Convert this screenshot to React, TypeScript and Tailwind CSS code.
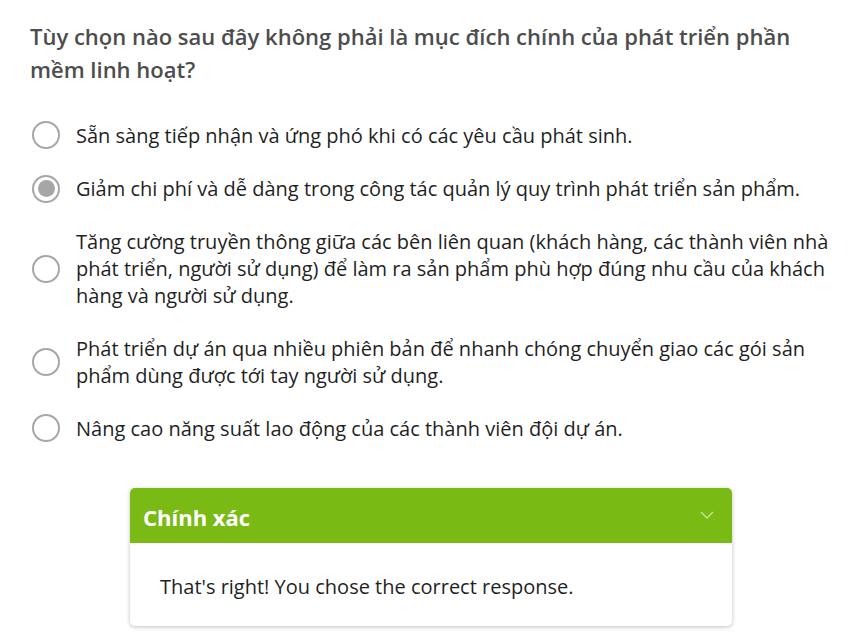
import React from "react";

const options = [
  "Sẵn sàng tiếp nhận và ứng phó khi có các yêu cầu phát sinh.",
  "Giảm chi phí và dễ dàng trong công tác quản lý quy trình phát triển sản phẩm.",
  "Tăng cường truyền thông giữa các bên liên quan (khách hàng, các thành viên nhà phát triển, người sử dụng) để làm ra sản phẩm phù hợp đúng nhu cầu của khách hàng và người sử dụng.",
  "Phát triển dự án qua nhiều phiên bản để nhanh chóng chuyển giao các gói sản phẩm dùng được tới tay người sử dụng.",
  "Nâng cao năng suất lao động của các thành viên đội dự án.",
];

export default function App() {
  return (
    <div
      className="w-[855px] h-[640px] bg-white overflow-hidden"
      style={{ fontFamily: '"Open Sans", "Noto Sans", sans-serif' }}
    >
      <div className="pl-[30px] pr-[22px] pt-[20px]">
        <h1 className="pr-[8px] text-[22px] leading-[33px] font-semibold text-[#4d4d4d]">
          Tùy chọn nào sau đây không phải là mục đích chính của phát triển phần mềm linh hoạt?
        </h1>
        <div className="mt-[35px] flex flex-col gap-[25.5px]">
          {options.map((o, i) => (
            <div key={i} className="flex items-center">
              <div className="ml-[2px] w-[28px] h-[28px] shrink-0 rounded-full border-[2.5px] border-[#a6a6a6] flex items-center justify-center">
                {i === 1 && <div className="w-[17px] h-[17px] rounded-full bg-[#a6a6a6]" />}
              </div>
              <div className="ml-[16px] text-[20px] leading-[27px] text-[#1f1f1f]">{o}</div>
            </div>
          ))}
        </div>
        <div className="mt-[46px] ml-[100px] w-[602px] rounded-[5px] bg-white shadow-[0_1px_4px_rgba(0,0,0,0.25)] overflow-hidden">
          <div className="h-[55px] bg-[#7aba14] flex items-center justify-between pl-[13px] pr-[18px] pt-[3px]">
            <span className="text-[22px] font-bold text-white">Chính xác</span>
            <svg width="14" height="8" viewBox="0 0 14 8" fill="none" className="-mt-[4px]">
              <path d="M1 1l6 6 6-6" stroke="#c6e69a" strokeWidth="1.3" />
            </svg>
          </div>
          <div className="h-[83px] flex items-center pl-[30px] pt-[4px] text-[20px] text-[#1f1f1f]">
            That's right! You chose the correct response.
          </div>
        </div>
      </div>
    </div>
  );
}
